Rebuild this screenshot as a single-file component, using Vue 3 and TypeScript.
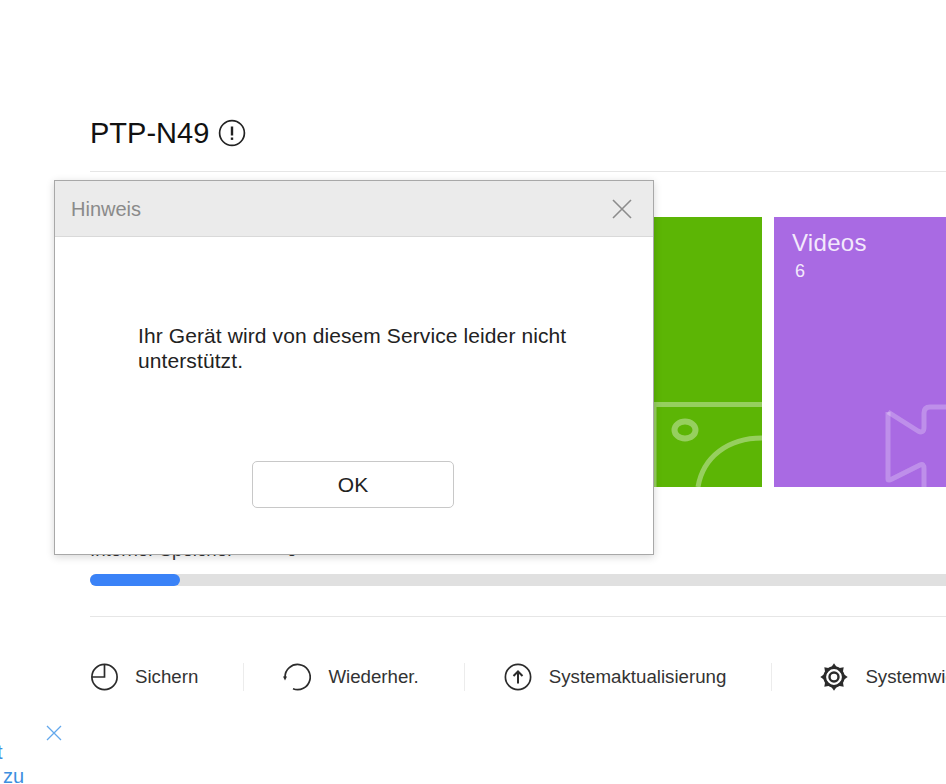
<script setup lang="ts">
const actions = [
  { label: 'Sichern', icon: 'backup' },
  { label: 'Wiederher.', icon: 'restore' },
  { label: 'Systemaktualisierung', icon: 'update' },
  { label: 'Systemwiederherstellung', icon: 'settings' },
]

// Zähne des Zahnrads, alle 45 Grad
const gearTeeth = [0, 45, 90, 135, 180, 225, 270, 315]
</script>

<template>
  <div class="page">
    <div class="device">
      <h1 class="device-name">PTP-N49</h1>
      <svg class="info-icon" viewBox="0 0 28 28" width="28" height="28" fill="none" stroke="#222">
        <circle cx="14" cy="14" r="12.4" stroke-width="1.700" />
        <path d="M14 7.500v9" stroke-width="2.400" />
        <path d="M14 18.500v2.400" stroke-width="2.400" />
      </svg>
    </div>

    <div class="tiles">
      <div class="tile tile-blue" />
      <div class="tile tile-green">
        <svg class="tile-deco" viewBox="0 0 330 270" fill="none" stroke="#fff" stroke-opacity="0.36" stroke-width="5">
          <path d="M222 270V187.500H330" />
          <ellipse cx="253" cy="213" rx="10.500" ry="8.500" stroke-width="6" />
          <path d="M266 270C271 240 296 221 330 221" />
        </svg>
      </div>
      <div class="tile tile-purple">
        <div class="tile-title">Videos</div>
        <div class="tile-count">6</div>
        <svg class="tile-deco" viewBox="0 0 330 270" fill="none" stroke="#fff" stroke-opacity="0.25" stroke-width="5" stroke-linejoin="round">
          <path d="M114 195L144 214Q150 217 150 210V196Q150 190 156 190H330" />
          <path d="M114 195V262Q114 264 118 262L146 248Q150 246 150 252V270" />
        </svg>
      </div>
    </div>

    <div class="storage">
      <div class="storage-row">
        <span class="storage-name">Interner Speicher</span>
        <span class="storage-size">Belegt: 128 GB / 1,5 TB</span>
      </div>
      <div class="bar">
        <div class="bar-fill" />
      </div>
    </div>

    <div class="actions">
      <div v-for="item in actions" :key="item.label" class="action">
        <svg class="action-icon" viewBox="0 0 28 28" width="28" height="28" fill="none" stroke="#2b2b2b" stroke-width="1.700">
          <template v-if="item.icon === 'backup'">
            <circle cx="14.500" cy="14" r="12.600" />
            <path d="M14.500 1.400V14H1.900" />
          </template>
          <template v-else-if="item.icon === 'restore'">
            <path d="M2 14A12.600 12.600 0 1 1 10 25.800" />
            <path d="M0 13.500H4L2 17.500Z" fill="#2b2b2b" stroke="none" />
          </template>
          <template v-else-if="item.icon === 'update'">
            <circle cx="14" cy="14" r="12.600" />
            <path d="M14 20.500V8.500M9.500 13L14 8.500L18.500 13" stroke-width="2" />
          </template>
          <template v-else>
            <circle cx="14" cy="14" r="9.300" stroke-width="2.800" />
            <circle cx="14" cy="14" r="4.500" stroke-width="2.400" />
            <path
              v-for="deg in gearTeeth"
              :key="deg"
              d="M10 6L14 0.300L18 6Z"
              fill="#2b2b2b"
              stroke="none"
              :transform="`rotate(${deg} 14 14)`"
            />
          </template>
        </svg>
        <span class="action-label">{{ item.label }}</span>
      </div>
    </div>

    <div class="hint">
      <svg class="hint-close" viewBox="0 0 16 16" width="16" height="16" fill="none" stroke="#63a8ec" stroke-width="1.300">
        <path d="M1 1l14 14M15 1L1 15" />
      </svg>
      <div class="hint-cut">t</div>
      <div class="hint-word">zu</div>
    </div>

    <div class="dialog">
      <div class="dialog-head">
        <span class="dialog-title">Hinweis</span>
        <svg viewBox="0 0 20 20" width="20" height="20" fill="none" stroke="#8c8c8c" stroke-width="1.600">
          <path d="M1 1l18 18M19 1L1 19" />
        </svg>
      </div>
      <div class="dialog-body">
        <p class="dialog-text">Ihr Gerät wird von diesem Service leider nicht unterstützt.</p>
        <button class="dialog-btn" type="button">OK</button>
      </div>
    </div>
  </div>
</template>

<style scoped>
.page {
  position: relative;
  height: 784px;
  padding: 112px 0 0 90px;
  box-sizing: border-box;
  overflow: hidden;
  background: #fff;
  color: #111;
  font-family: "Liberation Sans", Arial, sans-serif;
}

.device {
  display: flex;
  align-items: center;
  gap: 9px;
  height: 60px;
  padding-bottom: 18px;
  box-sizing: border-box;
  width: 1000px;
  border-bottom: 1px solid #e6e6e6;
}

.device-name {
  margin: 0;
  font-size: 29px;
  line-height: 42px;
  font-weight: 400;
}

.tiles {
  display: flex;
  gap: 12px;
  margin-top: 45px;
}

.tile {
  position: relative;
  flex: none;
  width: 330px;
  height: 270px;
  box-sizing: border-box;
  padding: 12px 18px;
  overflow: hidden;
  color: #f3e9fc;
}

.tile-blue {
  background: #3a8bf0;
}

.tile-green {
  background: #5cb505;
}

.tile-purple {
  background: #a96ae3;
}

.tile-title {
  font-size: 24px;
  line-height: 28px;
  letter-spacing: 0.3px;
}

.tile-count {
  margin-top: 3px;
  padding-left: 3px;
  font-size: 18px;
  line-height: 22px;
}

.tile-deco {
  position: absolute;
  left: 0;
  top: 0;
  width: 330px;
  height: 270px;
}

.storage {
  width: 1000px;
  margin-top: 53px;
  padding-bottom: 30px;
  border-bottom: 1px solid #e6e6e6;
}

.storage-row {
  display: flex;
  align-items: flex-start;
  gap: 22px;
  height: 20px;
  font-size: 18.700px;
  line-height: 20px;
  color: #333;
  white-space: nowrap;
}

.storage-size {
  font-size: 16px;
  line-height: 16px;
}

.bar {
  height: 12px;
  margin-top: 14px;
  border-radius: 6px;
  background: #e0e0e0;
}

.bar-fill {
  width: 90px;
  height: 12px;
  border-radius: 6px;
  background: #3a82f7;
}

.actions {
  display: flex;
  width: 1100px;
  margin-top: 46px;
}

.action {
  display: flex;
  flex: none;
  align-items: center;
  gap: 17px;
  height: 28px;
  margin-right: 39px;
  padding-right: 45px;
  border-right: 1px solid #ececec;
}

.action:last-child {
  margin-left: 9px;
  border-right: none;
}

.action-icon {
  flex: none;
}

.action-label {
  font-size: 18.700px;
  color: #333;
  white-space: nowrap;
}

.hint {
  position: absolute;
  left: 0;
  top: 725px;
  width: 62px;
  height: 59px;
  overflow: hidden;
  font-size: 20px;
  line-height: 24px;
  color: #3d8fe0;
}

.hint-close {
  position: absolute;
  left: 46px;
  top: 0;
}

.hint-cut {
  position: absolute;
  left: -3px;
  top: 15px;
}

.hint-word {
  position: absolute;
  left: 3px;
  top: 39px;
}

.dialog {
  position: absolute;
  left: 54px;
  top: 180px;
  width: 600px;
  height: 375px;
  box-sizing: border-box;
  border: 1px solid #a8a8a8;
  background: #fff;
  box-shadow: 0 2px 8px rgba(0, 0, 0, 0.16);
}

.dialog-head {
  display: flex;
  align-items: center;
  justify-content: space-between;
  height: 56px;
  padding: 0 21px 0 16px;
  box-sizing: border-box;
  background: #ebebeb;
  border-bottom: 1px solid #d9d9d9;
}

.dialog-title {
  padding-top: 1px;
  font-size: 20px;
  color: #8a8a8a;
}

.dialog-body {
  display: flex;
  flex-direction: column;
  align-items: center;
}

.dialog-text {
  align-self: stretch;
  height: 100px;
  margin: 86px 0 0;
  padding: 0 83px;
  font-size: 21px;
  letter-spacing: 0.1px;
  line-height: 25px;
  color: #222;
}

.dialog-btn {
  width: 202px;
  height: 47px;
  margin: 38px 2px 0 0;
  padding: 0;
  border: 1px solid #c8c8c8;
  border-radius: 5px;
  background: #fff;
  font-family: inherit;
  font-size: 21px;
  color: #222;
}
</style>

<style>
html,
body {
  margin: 0;
  overflow: hidden;
}
</style>
